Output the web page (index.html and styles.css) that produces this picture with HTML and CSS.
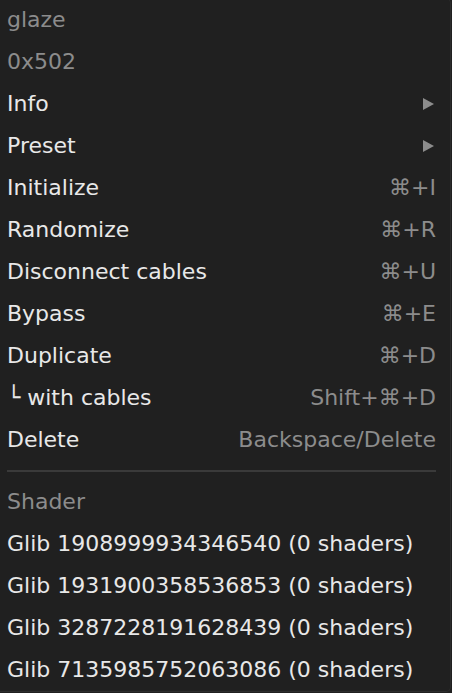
FILE: index.html
```html
<!DOCTYPE html>
<html>
<head>
<meta charset="utf-8">
<link rel="stylesheet" href="styles.css">
</head>
<body>
<div class="menu">
  <div class="row label">glaze</div>
  <div class="row label">0x502</div>
  <div class="row"><span>Info</span><svg class="arrow" width="12" height="12" viewBox="0 0 12 12"><polygon points="0,0 11,6 0,12"/></svg></div>
  <div class="row"><span>Preset</span><svg class="arrow" width="12" height="12" viewBox="0 0 12 12"><polygon points="0,0 11,6 0,12"/></svg></div>
  <div class="row"><span>Initialize</span><span class="key">⌘+I</span></div>
  <div class="row"><span>Randomize</span><span class="key">⌘+R</span></div>
  <div class="row"><span>Disconnect cables</span><span class="key">⌘+U</span></div>
  <div class="row"><span>Bypass</span><span class="key">⌘+E</span></div>
  <div class="row"><span>Duplicate</span><span class="key">⌘+D</span></div>
  <div class="row"><span><span class="corner">└</span> with cables</span><span class="key">Shift+⌘+D</span></div>
  <div class="row"><span>Delete</span><span class="key">Backspace/Delete</span></div>
  <div class="sep"></div>
  <div class="row label">Shader</div>
  <div class="row">Glib 1908999934346540 (0 shaders)</div>
  <div class="row">Glib 1931900358536853 (0 shaders)</div>
  <div class="row">Glib 3287228191628439 (0 shaders)</div>
  <div class="row">Glib 7135985752063086 (0 shaders)</div>
</div>
</body>
</html>
```
FILE: styles.css
```css
html, body {
  margin: 0;
  padding: 0;
  background: #202020;
  overflow: hidden;
}
.menu {
  margin-top: -2px;
  width: 450px;
  background: #202020;
  border: 1px solid #2c2c2c;
  border-left: none;
  border-radius: 0 5px 5px 0;
  font-family: "DejaVu Sans", sans-serif;
  font-size: 22px;
  color: #e8e8e8;
}
.row {
  height: 42px;
  line-height: 42px;
  padding: 0 14px 0 7px;
  display: flex;
  justify-content: space-between;
  align-items: center;
  white-space: nowrap;
}
.label {
  color: #8c8c8c;
}
.key {
  color: #8c8c8c;
}
.arrow {
  fill: #8c8c8c;
  margin-right: 1px;
}
.corner {
  font-size: 22px;
}
.sep {
  height: 20px;
  display: flex;
  align-items: center;
  padding: 0 14px 0 7px;
}
.sep::before {
  content: "";
  flex: 1;
  height: 2px;
  background: #3a3a3a;
}
```
